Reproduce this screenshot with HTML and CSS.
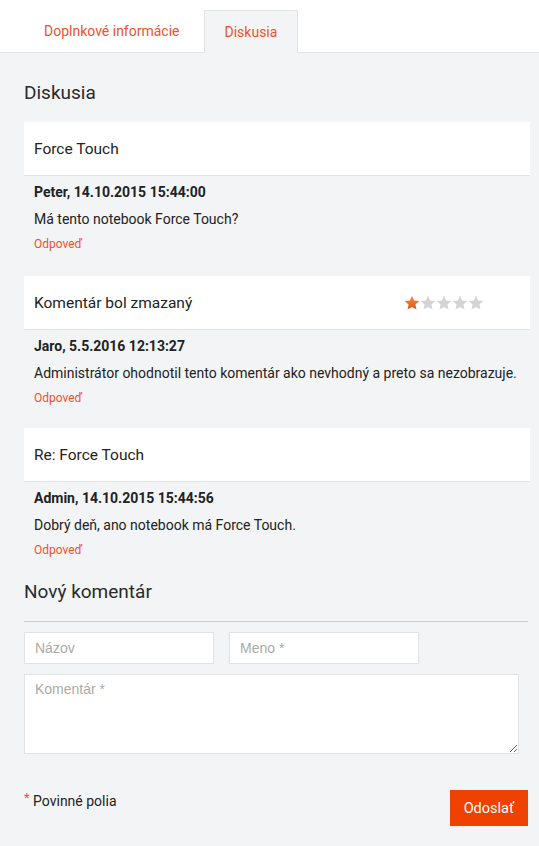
FILE: index.html
```html
<!DOCTYPE html>
<html lang="sk">
<head>
  <meta charset="UTF-8">
  <meta name="viewport" content="width=device-width, initial-scale=1.0">
  <title>Diskusia</title>
  <link rel="stylesheet" href="styles.css">
</head>
<body>

  <div class="tabs">
    <a class="tab">Doplnkové informácie</a>
    <a class="tab active">Diskusia</a>
  </div>

  <div class="content">
    <h2 class="title">Diskusia</h2>

    <div class="comment">
      <div class="comment-head">Force Touch</div>
      <div class="comment-body">
        <div class="author">Peter, 14.10.2015 15:44:00</div>
        <p class="text">Má tento notebook Force Touch?</p>
        <a class="reply">Odpoveď</a>
      </div>
    </div>

    <div class="comment">
      <div class="comment-head">
        <span>Komentár bol zmazaný</span>
        <span class="stars">
          <svg viewBox="0 0 16 16"><defs><linearGradient id="g" x1="0" y1="0" x2="0" y2="1"><stop offset="0" stop-color="#f7893f"/><stop offset="1" stop-color="#e0561c"/></linearGradient></defs><polygon fill="url(#g)" points="8,0.8 10.1,5.6 15.3,6 11.4,9.4 12.5,14.6 8,11.9 3.5,14.6 4.6,9.4 0.7,6 5.9,5.6"/></svg>
          <svg viewBox="0 0 16 16"><polygon class="off" points="8,0.8 10.1,5.6 15.3,6 11.4,9.4 12.5,14.6 8,11.9 3.5,14.6 4.6,9.4 0.7,6 5.9,5.6"/></svg>
          <svg viewBox="0 0 16 16"><polygon class="off" points="8,0.8 10.1,5.6 15.3,6 11.4,9.4 12.5,14.6 8,11.9 3.5,14.6 4.6,9.4 0.7,6 5.9,5.6"/></svg>
          <svg viewBox="0 0 16 16"><polygon class="off" points="8,0.8 10.1,5.6 15.3,6 11.4,9.4 12.5,14.6 8,11.9 3.5,14.6 4.6,9.4 0.7,6 5.9,5.6"/></svg>
          <svg viewBox="0 0 16 16"><polygon class="off" points="8,0.8 10.1,5.6 15.3,6 11.4,9.4 12.5,14.6 8,11.9 3.5,14.6 4.6,9.4 0.7,6 5.9,5.6"/></svg>
        </span>
      </div>
      <div class="comment-body">
        <div class="author">Jaro, 5.5.2016 12:13:27</div>
        <p class="text">Administrátor ohodnotil tento komentár ako nevhodný a preto sa nezobrazuje.</p>
        <a class="reply">Odpoveď</a>
      </div>
    </div>

    <div class="comment">
      <div class="comment-head">Re: Force Touch</div>
      <div class="comment-body">
        <div class="author">Admin, 14.10.2015 15:44:56</div>
        <p class="text">Dobrý deň, ano notebook má Force Touch.</p>
        <a class="reply">Odpoveď</a>
      </div>
    </div>

    <h2 class="title new">Nový komentár</h2>
    <hr class="divider">

    <form class="form">
      <div class="row">
        <input type="text" placeholder="Názov">
        <input type="text" placeholder="Meno *">
      </div>
      <textarea placeholder="Komentár *"></textarea>
      <div class="form-foot">
        <span class="required"><sup>*</sup> Povinné polia</span>
        <button type="button">Odoslať</button>
      </div>
    </form>
  </div>

</body>
</html>
```

FILE: styles.css
```css
body {
  margin: 0;
  font-family: Roboto, "Noto Sans", sans-serif;
  font-size: 14px;
  color: #333;
  background: #f3f4f6;
  min-height: 100vh;
}
.tabs {
  display: flex;
  padding: 10px 0 0 24px;
  background: #fff;
  border-bottom: 1px solid #e2e3e5;
}
.tab {
  display: block;
  padding: 0 23px 0 19px;
  line-height: 41px;
  font-size: 14px;
  color: #f0522a;
  cursor: pointer;
  border: 1px solid transparent;
  border-bottom: none;
}
.tab.active {
  padding: 0 20px;
  background: #f3f4f6;
  border-color: #e2e3e5;
  margin-bottom: -1px;
  line-height: 42px;
}
.content {
  padding: 0 9px 30px 24px;
}
.title {
  margin: 28px 0 17px;
  font-size: 19px;
  line-height: 24px;
  font-weight: 400;
  color: #2a2a2a;
}
.comment {
  margin-bottom: 22px;
}
.comment:first-of-type {
  margin-bottom: 24px;
}
.comment-head {
  display: flex;
  align-items: center;
  background: #fff;
  padding: 17px 10px 16px;
  line-height: 20px;
  font-size: 15.5px;
  color: #222;
  border-bottom: 1px solid #e2e3e5;
}
.stars {
  display: flex;
  margin-left: auto;
  margin-right: 36px;
}
.stars svg {
  width: 16px;
  height: 16px;
}
.stars .off {
  fill: #d4d4d4;
}
.comment-body {
  padding: 6px 10px 0;
}
.author {
  font-weight: 700;
  line-height: 20px;
  color: #222;
}
.text {
  margin: 7px 0 0;
  line-height: 20px;
  color: #222;
}
.reply {
  display: block;
  margin-top: 7px;
  font-size: 12px;
  line-height: 16px;
  color: #f0522a;
  cursor: pointer;
}
.title.new {
  margin: 18px 0 17px;
}
.divider {
  border: none;
  border-top: 1px solid #cdcdcd;
  margin: 0 2px 10px 0;
}
.row {
  display: flex;
  gap: 15px;
  margin-bottom: 10px;
}
input,
textarea {
  box-sizing: border-box;
  border: 1px solid #e2e3e5;
  background: #fff;
  font-family: "Liberation Sans", Arial, sans-serif;
  font-size: 14px;
  padding: 0 10px;
  color: #333;
}
input {
  width: 190px;
  height: 32px;
}
textarea {
  display: block;
  width: 495px;
  height: 80px;
  padding-top: 6px;
  resize: vertical;
}
::placeholder {
  color: #aaa;
}
.form-foot {
  display: flex;
  justify-content: space-between;
  align-items: flex-start;
  margin-top: 36px;
  padding-right: 2px;
}
.required {
  line-height: 20px;
  margin-top: 1px;
  color: #222;
}
.required sup {
  color: #f0522a;
  font-size: 13px;
  vertical-align: 4px;
  line-height: 0;
}
button {
  height: 36px;
  padding: 0 14px;
  border: none;
  background: #ef4100;
  color: #fff;
  font-family: Roboto, "Noto Sans", sans-serif;
  font-size: 14.5px;
  cursor: pointer;
}
```
